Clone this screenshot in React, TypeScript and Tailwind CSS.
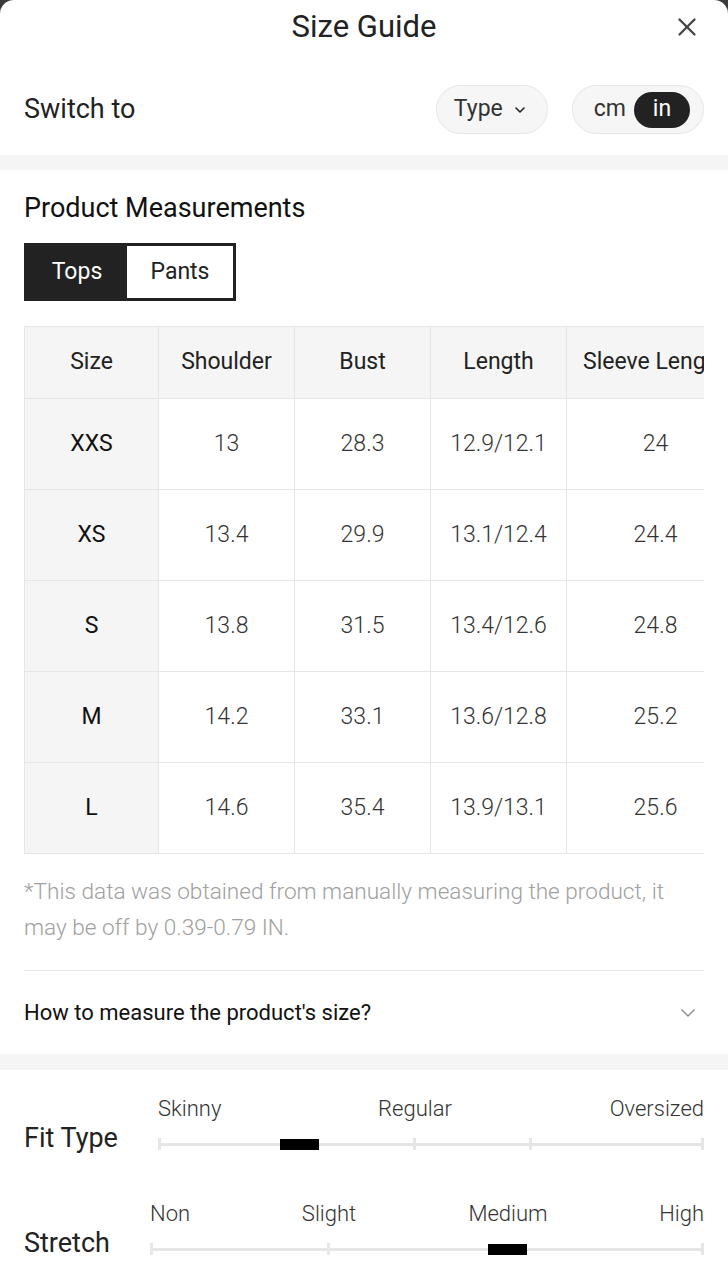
import { X, ChevronDown } from "lucide-react";

const rows = [
  { size: "XXS", shoulder: "13", bust: "28.3", length: "12.9/12.1", sleeve: "24" },
  { size: "XS", shoulder: "13.4", bust: "29.9", length: "13.1/12.4", sleeve: "24.4" },
  { size: "S", shoulder: "13.8", bust: "31.5", length: "13.4/12.6", sleeve: "24.8" },
  { size: "M", shoulder: "14.2", bust: "33.1", length: "13.6/12.8", sleeve: "25.2" },
  { size: "L", shoulder: "14.6", bust: "35.4", length: "13.9/13.1", sleeve: "25.6" },
];

function Scale({
  label,
  marks,
  ticks,
  marker,
  start,
}: {
  label: string;
  marks: { text: string; left: number; align: "left" | "center" | "right" }[];
  ticks: number[];
  marker: number;
  start: number;
}) {
  return (
    <div className="flex items-end">
      <div className="pb-[5px] text-[27px] leading-[32px] text-[#222]" style={{ width: start - 24 }}>
        {label}
      </div>
      <div className="relative flex-1 h-[64px]">
        {marks.map((m) => (
          <span
            key={m.text}
            className="absolute top-0 text-[22px] leading-[28px] text-[#333] font-light whitespace-nowrap"
            style={{
              left: m.align === "right" ? undefined : m.left,
              right: m.align === "right" ? 0 : undefined,
              transform: m.align === "center" ? "translateX(-50%)" : undefined,
            }}
          >
            {m.text}
          </span>
        ))}
        <div className="absolute left-0 right-0 top-[48px] h-[3px] bg-[#e6e6e6]" />
        {ticks.map((t) => (
          <div key={t} className="absolute top-[43px] w-[3px] h-[12px] bg-[#e6e6e6]" style={{ left: t }} />
        ))}
        <div className="absolute top-[44px] w-[39px] h-[11px] bg-black" style={{ left: marker }} />
      </div>
    </div>
  );
}

export default function App() {
  return (
    <div className="bg-[#3a3a3a] min-h-[1280px]" style={{ fontFamily: "Roboto, 'Noto Sans', sans-serif" }}>
      <div className="bg-white rounded-t-[14px] min-h-[1280px] overflow-hidden">
        {/* Header */}
        <div className="relative h-[54px] flex items-center justify-center">
          <h1 className="text-[31px] leading-[38px] text-[#222]">Size Guide</h1>
          <X className="absolute right-[26px] top-[12px] w-[30px] h-[30px] text-[#444]" strokeWidth={1.8} />
        </div>

        {/* Switch */}
        <div className="flex items-center justify-between px-6 h-[101px] pt-[10px]">
          <span className="text-[27px] text-[#222]">Switch to</span>
          <div className="flex items-center gap-[24px]">
            <div className="flex items-center gap-[9px] h-[49px] pl-[17px] pr-[19px] rounded-full bg-[#f6f6f6] border border-[#e6e6e6]">
              <span className="text-[23px] text-[#333]">Type</span>
              <ChevronDown className="w-[16px] h-[16px] text-[#222]" strokeWidth={2.4} />
            </div>
            <div className="flex items-center h-[49px] pl-[21px] pr-[13px] rounded-full bg-[#f6f6f6] border border-[#e6e6e6]">
              <span className="text-[23px] text-[#333] mr-[8px]">cm</span>
              <span className="flex items-center justify-center w-[56px] h-[36px] rounded-full bg-[#222] text-white text-[23px]">in</span>
            </div>
          </div>
        </div>

        <div className="h-[15px] bg-[#f5f5f5]" />

        {/* Product Measurements */}
        <div className="px-6 pt-[22px]">
          <h2 className="text-[27px] leading-[32px] text-[#111]">Product Measurements</h2>
          <div className="mt-[19px] flex w-[212px] h-[58px] border-[3px] border-[#222]">
            <div className="w-[100px] flex items-center justify-center bg-[#222] text-white text-[23px]">Tops</div>
            <div className="flex-1 flex items-center justify-center bg-white text-[#222] text-[23px]">Pants</div>
          </div>

          <div className="mt-[25px] overflow-hidden">
            <table className="border-collapse text-[23px] table-fixed w-[720px]">
              <colgroup>
                <col className="w-[134px]" />
                <col className="w-[136px]" />
                <col className="w-[136px]" />
                <col className="w-[136px]" />
                <col className="w-[178px]" />
              </colgroup>
              <thead>
                <tr className="h-[72px] bg-[#f5f5f5] text-[#222]">
                  {["Size", "Shoulder", "Bust", "Length", "Sleeve Length"].map((h) => (
                    <th key={h} className="font-normal border border-[#e6e6e6] text-center whitespace-nowrap">
                      {h === "Sleeve Length" ? <span className="block text-left pl-[16px]">{h}</span> : h}
                    </th>
                  ))}
                </tr>
              </thead>
              <tbody>
                {rows.map((r) => (
                  <tr key={r.size} className="h-[91px]">
                    <td className="bg-[#f5f5f5] border border-[#e6e6e6] text-center text-[#111]">{r.size}</td>
                    <td className="border border-[#e6e6e6] text-center text-[#333] font-light">{r.shoulder}</td>
                    <td className="border border-[#e6e6e6] text-center text-[#333] font-light">{r.bust}</td>
                    <td className="border border-[#e6e6e6] text-center text-[#333] font-light">{r.length}</td>
                    <td className="border border-[#e6e6e6] text-center text-[#333] font-light">{r.sleeve}</td>
                  </tr>
                ))}
              </tbody>
            </table>
          </div>

          <p className="mt-[20px] text-[22.6px] leading-[36px] text-[#a0a0a0] font-light">
            *This data was obtained from manually measuring the product, it may be off by 0.39-0.79 IN.
          </p>

          <div className="mt-[24px] border-t border-[#e6e6e6] h-[84px] flex items-center justify-between">
            <span className="text-[22px] text-[#111]">How to measure the product's size?</span>
            <ChevronDown className="w-[24px] h-[24px] text-[#888] mr-[4px]" strokeWidth={1.4} />
          </div>
        </div>

        <div className="h-[16px] bg-[#f5f5f5]" />

        {/* Fit */}
        <div className="px-6 pt-[25px] flex flex-col gap-[41px]">
          <Scale
            label="Fit Type"
            start={158}
            marks={[
              { text: "Skinny", left: 0, align: "left" },
              { text: "Regular", left: 257, align: "center" },
              { text: "Oversized", left: 0, align: "right" },
            ]}
            ticks={[0, 255, 371, 543]}
            marker={122}
          />
          <Scale
            label="Stretch"
            start={150}
            marks={[
              { text: "Non", left: 0, align: "left" },
              { text: "Slight", left: 179, align: "center" },
              { text: "Medium", left: 358, align: "center" },
              { text: "High", left: 0, align: "right" },
            ]}
            ticks={[0, 177, 551]}
            marker={338}
          />
        </div>
      </div>
    </div>
  );
}
